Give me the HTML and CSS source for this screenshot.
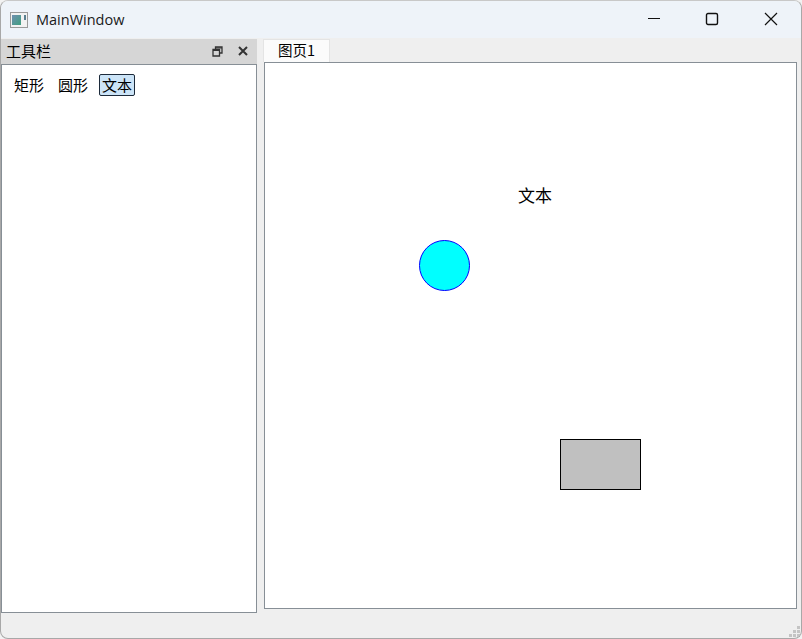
FILE: index.html
```html
<!DOCTYPE html>
<html lang="zh-CN">
<head>
<meta charset="utf-8">
<title>MainWindow</title>
<link rel="stylesheet" href="styles.css">
</head>
<body>
<div class="window">
  <header class="titlebar">
    <div class="title-left">
      <svg class="app-icon" width="18" height="16" viewBox="0 0 18 16">
        <defs><linearGradient id="g" x1="0" y1="0" x2="1" y2="1"><stop offset="0" stop-color="#6f8fb0"/><stop offset="1" stop-color="#3f9f80"/></linearGradient></defs>
        <rect x="0.5" y="0.5" width="17" height="15" fill="#f2f2f2" stroke="#9a9a9a"/>
        <rect x="2" y="3" width="9" height="10" fill="url(#g)"/>
        <rect x="14" y="3" width="2" height="5" fill="#5a7f90"/>
      </svg>
      <span class="title-text">MainWindow</span>
    </div>
    <div class="controls">
      <div class="ctl"><svg width="14" height="14" viewBox="0 0 14 14"><path d="M1 6.5H13" stroke="#111" stroke-width="1.2" fill="none"/></svg></div>
      <div class="ctl"><svg width="14" height="14" viewBox="0 0 14 14"><rect x="1.5" y="1.5" width="11" height="11" rx="1.5" stroke="#111" stroke-width="1.4" fill="none"/></svg></div>
      <div class="ctl"><svg width="14" height="14" viewBox="0 0 14 14"><path d="M1 1L13 13M13 1L1 13" stroke="#111" stroke-width="1.2" fill="none"/></svg></div>
    </div>
  </header>
  <div class="main">
    <section class="dock">
      <div class="dock-title">
        <span>工具栏</span>
        <div class="dock-btns">
          <svg width="11" height="11" viewBox="0 0 11 11"><path d="M3.5 3V1H10V7H7.5M1 3.5H7.5V10H1Z" stroke="#333" stroke-width="1.3" fill="none"/><path d="M1 4.5H7.5M3.5 2H10" stroke="#333" fill="none"/></svg>
          <svg width="10" height="10" viewBox="0 0 10 10"><path d="M1 1L9 9M9 1L1 9" stroke="#333" stroke-width="2" fill="none"/></svg>
        </div>
      </div>
      <div class="dock-body">
        <div class="tools">
          <span class="tool">矩形</span>
          <span class="tool">圆形</span>
          <span class="tool active">文本</span>
        </div>
      </div>
    </section>
    <section class="tabs">
      <div class="tabbar"><span class="tab">图页1</span></div>
      <div class="pane">
        <span class="shape-text">文本</span>
        <div class="circle"></div>
        <div class="rect"></div>
      </div>
    </section>
  </div>
  <footer class="status">
    <svg class="grip" width="12" height="12" viewBox="0 0 12 12" fill="#c4c4c4">
      <rect x="8" y="0" width="3" height="3"/><rect x="4" y="4" width="3" height="3"/><rect x="8" y="4" width="3" height="3"/>
      <rect x="0" y="8" width="3" height="3"/><rect x="4" y="8" width="3" height="3"/><rect x="8" y="8" width="3" height="3"/>
    </svg>
  </footer>
</div>
</body>
</html>
```
FILE: styles.css
```css
* { box-sizing: border-box; }
html, body { margin: 0; height: 100%; background: #f2f2f2; overflow: hidden; }
body { font-family: "Noto Sans CJK SC", "Liberation Sans", sans-serif; font-size: 15px; color: #000; }
.window {
  width: 802px; height: 639px; display: flex; flex-direction: column;
  background: #efefef; border: 1px solid #a8a8a8; border-top-color: #c8c8c8;
  border-radius: 8px; overflow: hidden;
}
.titlebar {
  height: 37px; flex: none; background: #eef3f9;
  display: flex; justify-content: space-between; align-items: center;
}
.title-left { display: flex; align-items: center; padding-left: 9px; gap: 8px; }
.app-icon { display: block; }
.title-text { font-family: "Open Sans", "Noto Sans", sans-serif; font-size: 14.5px; color: #1a1a1a; }
.controls { display: flex; padding-right: 1px; margin-top: -2px; }
.ctl { width: 58.5px; display: flex; justify-content: center; align-items: center; }
.main { flex: 1; display: flex; min-height: 0; padding-top: 1px; }
.dock { width: 256px; flex: none; display: flex; flex-direction: column; height: 574px; }
.dock-title {
  height: 25px; flex: none; background: #d6d6d6; display: flex; align-items: center;
  justify-content: space-between; padding: 0 9px 2px 5px; line-height: 1;
}
.dock-btns { display: flex; align-items: center; gap: 15px; margin-top: 1px; }
.dock-btns svg { display: block; }
.dock-body { flex: 1; background: #fff; border: 1px solid #878f96; padding: 9px 0 0 9px; }
.tools { display: flex; gap: 4px; }
.tool { height: 22px; padding: 0; border: 1px solid transparent; border-radius: 2px; line-height: 20px; width: 36px; text-align: center; white-space: nowrap; }
.tools .tool:nth-child(2) { margin-left: 4px; }
.tools .tool:nth-child(3) { margin-left: 4px; }
.tool.active { background: #cce4f7; border-color: #1c2a3a; }
.tabs { margin-left: 6px; width: 534px; display: flex; flex-direction: column; }
.tabbar { height: 23px; display: flex; flex: none; }
.tab {
  width: 67px; height: 23px; background: #fbfbfb; border: 1px solid #e4e4e4; border-bottom: 0;
  text-align: center; line-height: 20px; font-size: 14.5px;
}
.pane { position: relative; margin-left: 1px; height: 547px; background: #fff; border: 1px solid #878f96; }
.shape-text { position: absolute; left: 253px; top: 119px; font-size: 17px; line-height: 26px; color: #000; }
.circle { position: absolute; left: 154px; top: 177px; width: 51px; height: 51px; border-radius: 50%; background: #00ffff; border: 1px solid #0000ff; }
.rect { position: absolute; left: 295px; top: 376px; width: 81px; height: 51px; background: #c0c0c0; border: 1px solid #000; }
.status { height: 26px; flex: none; position: relative; }
.grip { position: absolute; right: 0; bottom: 0; }
```
